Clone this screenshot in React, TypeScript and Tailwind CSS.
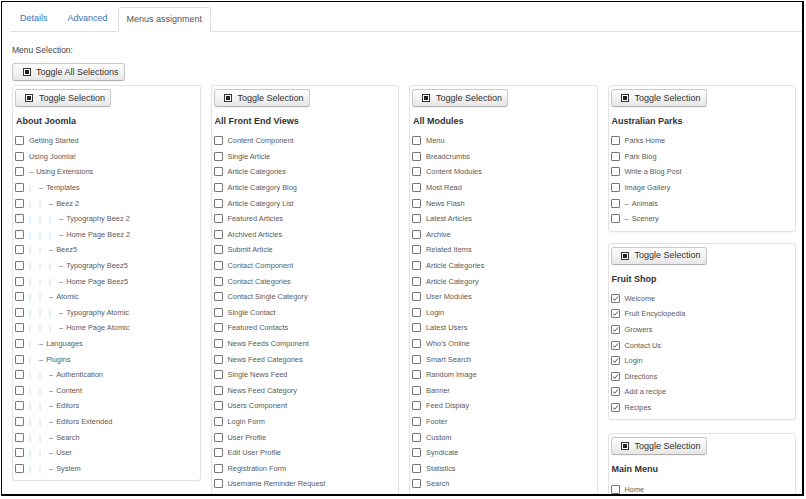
import React from "react";

type Item = { label: string; level?: number; checked?: boolean };

const aboutJoomla: Item[] = [
  { label: "Getting Started" },
  { label: "Using Joomla!" },
  { label: "Using Extensions", level: 1 },
  { label: "Templates", level: 2 },
  { label: "Beez 2", level: 3 },
  { label: "Typography Beez 2", level: 4 },
  { label: "Home Page Beez 2", level: 4 },
  { label: "Beez5", level: 3 },
  { label: "Typography Beez5", level: 4 },
  { label: "Home Page Beez5", level: 4 },
  { label: "Atomic", level: 3 },
  { label: "Typography Atomic", level: 4 },
  { label: "Home Page Atomic", level: 4 },
  { label: "Languages", level: 2 },
  { label: "Plugins", level: 2 },
  { label: "Authentication", level: 3 },
  { label: "Content", level: 3 },
  { label: "Editors", level: 3 },
  { label: "Editors Extended", level: 3 },
  { label: "Search", level: 3 },
  { label: "User", level: 3 },
  { label: "System", level: 3 },
];

const frontEndViews: Item[] = [
  "Content Component",
  "Single Article",
  "Article Categories",
  "Article Category Blog",
  "Article Category List",
  "Featured Articles",
  "Archived Articles",
  "Submit Article",
  "Contact Component",
  "Contact Categories",
  "Contact Single Category",
  "Single Contact",
  "Featured Contacts",
  "News Feeds Component",
  "News Feed Categories",
  "Single News Feed",
  "News Feed Category",
  "Users Component",
  "Login Form",
  "User Profile",
  "Edit User Profile",
  "Registration Form",
  "Username Reminder Request",
].map((label) => ({ label }));

const allModules: Item[] = [
  "Menu",
  "Breadcrumbs",
  "Content Modules",
  "Most Read",
  "News Flash",
  "Latest Articles",
  "Archive",
  "Related Items",
  "Article Categories",
  "Article Category",
  "User Modules",
  "Login",
  "Latest Users",
  "Who's Online",
  "Smart Search",
  "Random Image",
  "Banner",
  "Feed Display",
  "Footer",
  "Custom",
  "Syndicate",
  "Statistics",
  "Search",
].map((label) => ({ label }));

const australianParks: Item[] = [
  { label: "Parks Home" },
  { label: "Park Blog" },
  { label: "Write a Blog Post" },
  { label: "Image Gallery" },
  { label: "Animals", level: 1 },
  { label: "Scenery", level: 1 },
];

const fruitShop: Item[] = [
  "Welcome",
  "Fruit Encyclopedia",
  "Growers",
  "Contact Us",
  "Login",
  "Directions",
  "Add a recipe",
  "Recipes",
].map((label) => ({ label, checked: true }));

const mainMenu: Item[] = [{ label: "Home" }];

const ToggleIcon = () => (
  <svg width="8" height="8" viewBox="0 0 8 8" className="shrink-0">
    <rect x="0.5" y="0.5" width="7" height="7" fill="#fff" stroke="#333" />
    <rect x="2" y="2" width="4" height="4" fill="#222" />
  </svg>
);

const ToggleButton = ({ label, wide }: { label: string; wide?: boolean }) => (
  <button
    className={`flex items-center h-[18px] ${
      wide ? "w-[113px] pl-[10px] gap-[5px]" : "w-[96px] pl-[9px] gap-[6px]"
    } rounded-[3px] border border-[#c8c8c8] border-b-[#b0b0b0] bg-gradient-to-b from-white to-[#e6e6e6] text-[9px] text-[#333] leading-none shadow-[0_1px_1px_rgba(0,0,0,0.05)]`}
  >
    <ToggleIcon />
    <span>{label}</span>
  </button>
);

const CheckBox = ({ checked }: { checked?: boolean }) => (
  <span className="flex items-center justify-center w-[9px] h-[9px] shrink-0 border border-[#777] rounded-[1px] bg-white">
    {checked && (
      <svg width="7" height="7" viewBox="0 0 7 7">
        <path d="M1 3.6 L2.8 5.3 L6 1.4" fill="none" stroke="#555" strokeWidth="1" />
      </svg>
    )}
  </span>
);

const Row = ({ item }: { item: Item }) => {
  const level = item.level || 0;
  const pipes = level > 1 ? level - 1 : 0;
  return (
    <div className="flex items-center h-[15.6px] text-[7.4px] text-[#5a5a5a] whitespace-nowrap">
      <CheckBox checked={item.checked} />
      <div className="flex items-center ml-[5px]">
        {Array.from({ length: pipes }).map((_, i) => (
          <span key={i} className="w-[10px] text-[#ccc]">
            |
          </span>
        ))}
        {level > 0 && <span className="mr-[3px]">–</span>}
        <span>{item.label}</span>
      </div>
    </div>
  );
};

const Panel = ({ title, items, className = "" }: { title: string; items: Item[]; className?: string }) => (
  <div
    className={`border border-[#e3e3e3] rounded-[3px] bg-white pt-[3px] pl-[2px] pb-[4px] shadow-[0_1px_1px_rgba(0,0,0,0.03)] ${className}`}
  >
    <ToggleButton label="Toggle Selection" />
    <div className="mt-[7px] mb-[5px] h-[14px] leading-[14px] text-[9px] font-bold text-[#333] pl-[1px]">
      {title}
    </div>
    <div className="flex flex-col">
      {items.map((item, i) => (
        <Row key={i} item={item} />
      ))}
    </div>
  </div>
);

const App = () => {
  return (
    <div className="w-[806px] h-[499px] bg-white" style={{ fontFamily: '"Liberation Sans", Arial, sans-serif' }}>
      <div className="ml-[1px] mt-[1px] w-[803px] h-[495px] border-t border-l border-r-2 border-b-2 border-black overflow-hidden bg-white">
        <div className="pl-[8px] pt-[5px]">
          <div className="flex items-end h-[25px] border-b border-[#e0e0e0] text-[9px]">
            <div className="px-[10px] h-[24px] flex items-center text-[#3b73b9]">Details</div>
            <div className="px-[10px] h-[24px] flex items-center text-[#3b73b9]">Advanced</div>
            <div className="px-[8px] h-[25px] -mb-px flex items-center text-[#555] bg-white border border-[#e0e0e0] border-b-white rounded-t-[3px]">
              Menus assignment
            </div>
          </div>
        </div>
        <div className="pl-[10px] pr-[6px]">
          <div className="mt-[12px] h-[12px] leading-[12px] text-[8.5px] text-[#444]">Menu Selection:</div>
          <div className="mt-[7px]">
            <ToggleButton label="Toggle All Selections" wide />
          </div>
          <div className="mt-[4px] grid grid-cols-4 gap-[10px] items-start">
            <Panel title="About Joomla" items={aboutJoomla} />
            <Panel title="All Front End Views" items={frontEndViews} />
            <Panel title="All Modules" items={allModules} />
            <div className="flex flex-col">
              <Panel title="Australian Parks" items={australianParks} />
              <Panel title="Fruit Shop" items={fruitShop} className="mt-[11px]" />
              <Panel title="Main Menu" items={mainMenu} className="mt-[13px]" />
            </div>
          </div>
        </div>
      </div>
    </div>
  );
};

export default App;
